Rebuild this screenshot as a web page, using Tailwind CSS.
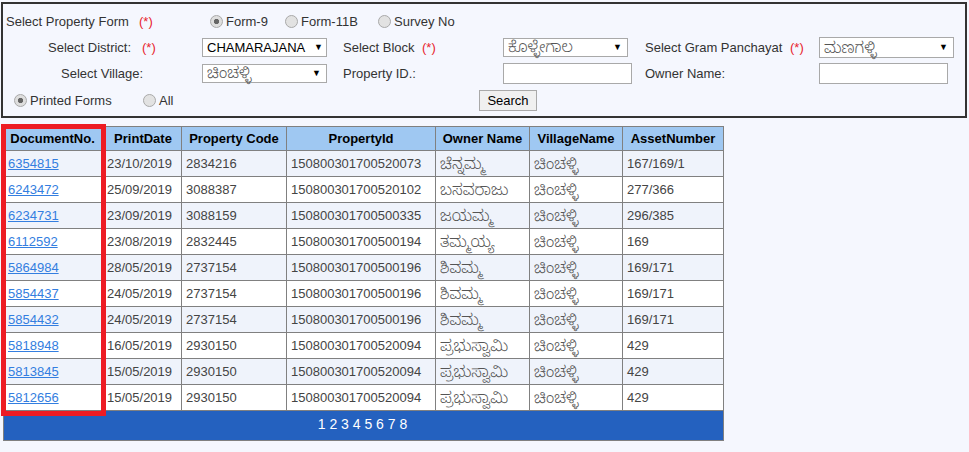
<!DOCTYPE html>
<html><head><meta charset="utf-8"><script src="https://cdn.jsdelivr.net/npm/@tailwindcss/browser@4"></script></head>
<body class="bg-[#f5f7fe] font-['Liberation_Sans','Noto_Sans_Kannada','Noto_Sans',sans-serif] text-[13px] leading-none text-[#333] overflow-hidden">
<div class="relative h-[452px] w-[969px]">
<form class="absolute left-[1px] top-[2px] h-[116px] w-[966px] border-2 border-[#333] bg-[#f5f7fe]">
  <div class="flex h-[34px] items-center pl-[3px]"><span class="w-[133px]">Select Property Form</span><span class="w-[71px] text-[#e8242c]">(*)</span>
    <label class="flex w-[75px] items-center gap-[3px]"><input type="radio" name="f" checked class="h-[13px] w-[13px] appearance-none rounded-full border border-[#a9a9a9] bg-[radial-gradient(circle,#666_0,#666_30%,#dedede_38%)]">Form-9</label>
    <label class="flex w-[93px] items-center gap-[3px]"><input type="radio" name="f" class="h-[13px] w-[13px] appearance-none rounded-full border border-[#a9a9a9] bg-[#e2e2e2]">Form-11B</label>
    <label class="flex items-center gap-[3px]"><input type="radio" name="f" class="h-[13px] w-[13px] appearance-none rounded-full border border-[#a9a9a9] bg-[#e2e2e2]">Survey No</label>
  </div>
  <div class="flex h-[18px] items-center pl-[45px]"><span class="w-[94px]">Select District:</span><span class="w-[60px] text-[#e8242c]">(*)</span>
    <div class="flex h-[19px] w-[125px] items-center justify-between border border-[#a9a9a9] bg-white pl-[4px] pr-[3px] text-black"><span>CHAMARAJANA</span><span class="text-[9px]">▼</span></div>
    <span class="ml-[16px] w-[79px]">Select Block</span><span class="w-[81px] text-[#e8242c]">(*)</span>
    <div class="flex h-[19px] w-[125px] items-center justify-between border border-[#a9a9a9] bg-white pl-[4px] pr-[5px] text-black"><span class="text-[15.5px] font-light text-[#555]">ಕೊಳ್ಳೇಗಾಲ</span><span class="text-[9px]">▼</span></div>
    <span class="ml-[17px] w-[145px]">Select Gram Panchayat</span><span class="w-[29px] text-[#e8242c]">(*)</span>
    <div class="mt-[1px] flex h-[21px] w-[135px] items-center justify-between border border-[#a9a9a9] bg-white pl-[4px] pr-[5px] text-black"><span class="text-[15.5px] font-light text-[#555]">ಮಣಗಳ್ಳಿ</span><span class="text-[9px]">▼</span></div>
  </div>
  <div class="flex h-[34px] items-center pl-[58px]"><span class="w-[141px]">Select Village:</span>
    <div class="flex h-[19px] w-[125px] items-center justify-between border border-[#a9a9a9] bg-white pl-[4px] pr-[5px] text-black"><span class="text-[15.5px] font-light text-[#555]">ಚಿಂಚಳ್ಳಿ</span><span class="text-[9px]">▼</span></div>
    <span class="ml-[16px] w-[160px]">Property ID.:</span>
    <input class="h-[21px] w-[129px] border border-[#a9a9a9] bg-white">
    <span class="ml-[13px] w-[174px]">Owner Name:</span>
    <input class="h-[21px] w-[129px] border border-[#a9a9a9] bg-white">
  </div>
  <div class="flex h-[21px] items-center pl-[11px]">
    <label class="flex w-[129px] items-center gap-[3px]"><input type="radio" name="p" checked class="h-[13px] w-[13px] appearance-none rounded-full border border-[#a9a9a9] bg-[radial-gradient(circle,#666_0,#666_30%,#dedede_38%)]">Printed Forms</label>
    <label class="flex w-[336px] items-center gap-[3px]"><input type="radio" name="p" class="h-[13px] w-[13px] appearance-none rounded-full border border-[#a9a9a9] bg-[#e2e2e2]">All</label>
    <button type="button" class="h-[21px] w-[58px] border border-[#a9a9a9] bg-[#f0f0f0] text-black">Search</button>
  </div>
</form>
<div class="absolute left-[3px] top-[126px] w-[720px]">
<table class="w-[720px] table-fixed border-collapse border border-[#808080] text-[#444]">
<colgroup><col class="w-[101px]"><col class="w-[77px]"><col class="w-[105px]"><col class="w-[149px]"><col class="w-[94px]"><col class="w-[93px]"><col class="w-[101px]"></colgroup>
<thead><tr class="h-[24px] bg-[#9fc8f2] font-bold text-black">
<th class="border border-[#808080] pr-[3px]">DocumentNo.</th><th class="border border-[#808080]">PrintDate</th><th class="border border-[#808080]">Property Code</th><th class="border border-[#808080]">PropertyId</th><th class="border border-[#808080]">Owner Name</th><th class="border border-[#808080]">VillageName</th><th class="border border-[#808080]">AssetNumber</th>
</tr></thead>
<tbody>
<tr class="h-[26px] bg-[#eff3fb]"><td class="border border-[#808080] pl-1"><a href="#" class="text-[#337ee0] underline">6354815</a></td><td class="border border-[#808080] pl-[2px]">23/10/2019</td><td class="border border-[#808080] pl-1">2834216</td><td class="border border-[#808080] pl-1">150800301700520073</td><td class="border border-[#808080] pl-1 text-[15.5px] font-light text-[#555]">ಚೆನ್ನಮ್ಮ</td><td class="border border-[#808080] pl-1 text-[15.5px] font-light text-[#555]">ಚಿಂಚಳ್ಳಿ</td><td class="border border-[#808080] pl-1">167/169/1</td></tr>
<tr class="h-[26px] bg-white"><td class="border border-[#808080] pl-1"><a href="#" class="text-[#337ee0] underline">6243472</a></td><td class="border border-[#808080] pl-[2px]">25/09/2019</td><td class="border border-[#808080] pl-1">3088387</td><td class="border border-[#808080] pl-1">150800301700520102</td><td class="border border-[#808080] pl-1 text-[15.5px] font-light text-[#555]">ಬಸವರಾಜು</td><td class="border border-[#808080] pl-1 text-[15.5px] font-light text-[#555]">ಚಿಂಚಳ್ಳಿ</td><td class="border border-[#808080] pl-1">277/366</td></tr>
<tr class="h-[26px] bg-[#eff3fb]"><td class="border border-[#808080] pl-1"><a href="#" class="text-[#337ee0] underline">6234731</a></td><td class="border border-[#808080] pl-[2px]">23/09/2019</td><td class="border border-[#808080] pl-1">3088159</td><td class="border border-[#808080] pl-1">150800301700500335</td><td class="border border-[#808080] pl-1 text-[15.5px] font-light text-[#555]">ಜಯಮ್ಮ</td><td class="border border-[#808080] pl-1 text-[15.5px] font-light text-[#555]">ಚಿಂಚಳ್ಳಿ</td><td class="border border-[#808080] pl-1">296/385</td></tr>
<tr class="h-[26px] bg-white"><td class="border border-[#808080] pl-1"><a href="#" class="text-[#337ee0] underline">6112592</a></td><td class="border border-[#808080] pl-[2px]">23/08/2019</td><td class="border border-[#808080] pl-1">2832445</td><td class="border border-[#808080] pl-1">150800301700500194</td><td class="border border-[#808080] pl-1 text-[15.5px] font-light text-[#555]">ತಮ್ಮಯ್ಯ</td><td class="border border-[#808080] pl-1 text-[15.5px] font-light text-[#555]">ಚಿಂಚಳ್ಳಿ</td><td class="border border-[#808080] pl-1">169</td></tr>
<tr class="h-[26px] bg-[#eff3fb]"><td class="border border-[#808080] pl-1"><a href="#" class="text-[#337ee0] underline">5864984</a></td><td class="border border-[#808080] pl-[2px]">28/05/2019</td><td class="border border-[#808080] pl-1">2737154</td><td class="border border-[#808080] pl-1">150800301700500196</td><td class="border border-[#808080] pl-1 text-[15.5px] font-light text-[#555]">ಶಿವಮ್ಮ</td><td class="border border-[#808080] pl-1 text-[15.5px] font-light text-[#555]">ಚಿಂಚಳ್ಳಿ</td><td class="border border-[#808080] pl-1">169/171</td></tr>
<tr class="h-[26px] bg-white"><td class="border border-[#808080] pl-1"><a href="#" class="text-[#337ee0] underline">5854437</a></td><td class="border border-[#808080] pl-[2px]">24/05/2019</td><td class="border border-[#808080] pl-1">2737154</td><td class="border border-[#808080] pl-1">150800301700500196</td><td class="border border-[#808080] pl-1 text-[15.5px] font-light text-[#555]">ಶಿವಮ್ಮ</td><td class="border border-[#808080] pl-1 text-[15.5px] font-light text-[#555]">ಚಿಂಚಳ್ಳಿ</td><td class="border border-[#808080] pl-1">169/171</td></tr>
<tr class="h-[26px] bg-[#eff3fb]"><td class="border border-[#808080] pl-1"><a href="#" class="text-[#337ee0] underline">5854432</a></td><td class="border border-[#808080] pl-[2px]">24/05/2019</td><td class="border border-[#808080] pl-1">2737154</td><td class="border border-[#808080] pl-1">150800301700500196</td><td class="border border-[#808080] pl-1 text-[15.5px] font-light text-[#555]">ಶಿವಮ್ಮ</td><td class="border border-[#808080] pl-1 text-[15.5px] font-light text-[#555]">ಚಿಂಚಳ್ಳಿ</td><td class="border border-[#808080] pl-1">169/171</td></tr>
<tr class="h-[26px] bg-white"><td class="border border-[#808080] pl-1"><a href="#" class="text-[#337ee0] underline">5818948</a></td><td class="border border-[#808080] pl-[2px]">16/05/2019</td><td class="border border-[#808080] pl-1">2930150</td><td class="border border-[#808080] pl-1">150800301700520094</td><td class="border border-[#808080] pl-1 text-[15.5px] font-light text-[#555]">ಪ್ರಭುಸ್ವಾಮಿ</td><td class="border border-[#808080] pl-1 text-[15.5px] font-light text-[#555]">ಚಿಂಚಳ್ಳಿ</td><td class="border border-[#808080] pl-1">429</td></tr>
<tr class="h-[26px] bg-[#eff3fb]"><td class="border border-[#808080] pl-1"><a href="#" class="text-[#337ee0] underline">5813845</a></td><td class="border border-[#808080] pl-[2px]">15/05/2019</td><td class="border border-[#808080] pl-1">2930150</td><td class="border border-[#808080] pl-1">150800301700520094</td><td class="border border-[#808080] pl-1 text-[15.5px] font-light text-[#555]">ಪ್ರಭುಸ್ವಾಮಿ</td><td class="border border-[#808080] pl-1 text-[15.5px] font-light text-[#555]">ಚಿಂಚಳ್ಳಿ</td><td class="border border-[#808080] pl-1">429</td></tr>
<tr class="h-[26px] bg-white"><td class="border border-[#808080] pl-1"><a href="#" class="text-[#337ee0] underline">5812656</a></td><td class="border border-[#808080] pl-[2px]">15/05/2019</td><td class="border border-[#808080] pl-1">2930150</td><td class="border border-[#808080] pl-1">150800301700520094</td><td class="border border-[#808080] pl-1 text-[15.5px] font-light text-[#555]">ಪ್ರಭುಸ್ವಾಮಿ</td><td class="border border-[#808080] pl-1 text-[15.5px] font-light text-[#555]">ಚಿಂಚಳ್ಳಿ</td><td class="border border-[#808080] pl-1">429</td></tr>
<tr class="h-[30px] bg-[#2461bf] text-center text-[14px] text-white"><td colspan="7" class="border border-[#808080] pb-[3px] pr-[2px]">1 2 3 4 5 6 7 8</td></tr>
</tbody></table>
</div>
<div class="absolute left-[1px] top-[124px] h-[292px] w-[105px] border-[5px] border-[#ed1c24]"></div>
</div>
</body></html>
